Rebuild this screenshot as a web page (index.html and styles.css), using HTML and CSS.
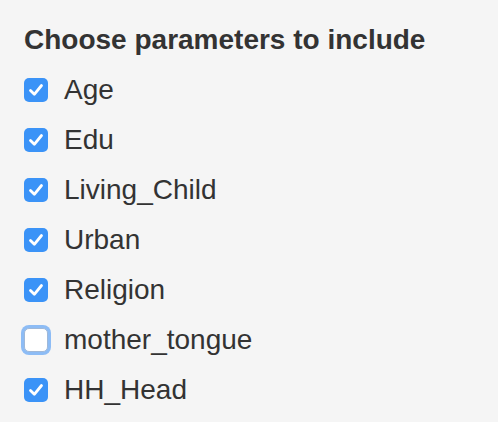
FILE: index.html
```html
<!DOCTYPE html>
<html>
<head>
<meta charset="utf-8">
<link rel="stylesheet" href="styles.css">
</head>
<body>
<div class="panel">
  <div class="group">
    <div class="title">Choose parameters to include</div>
    <div class="options">
      <label class="opt"><span class="box checked"><svg viewBox="0 0 24 24"><path d="M6.5 12.5 L10.3 16.3 L17.5 7.5" /></svg></span><span class="txt">Age</span></label>
      <label class="opt"><span class="box checked"><svg viewBox="0 0 24 24"><path d="M6.5 12.5 L10.3 16.3 L17.5 7.5" /></svg></span><span class="txt">Edu</span></label>
      <label class="opt"><span class="box checked"><svg viewBox="0 0 24 24"><path d="M6.5 12.5 L10.3 16.3 L17.5 7.5" /></svg></span><span class="txt">Living_Child</span></label>
      <label class="opt"><span class="box checked"><svg viewBox="0 0 24 24"><path d="M6.5 12.5 L10.3 16.3 L17.5 7.5" /></svg></span><span class="txt">Urban</span></label>
      <label class="opt"><span class="box checked"><svg viewBox="0 0 24 24"><path d="M6.5 12.5 L10.3 16.3 L17.5 7.5" /></svg></span><span class="txt">Religion</span></label>
      <label class="opt"><span class="box focus"></span><span class="txt">mother_tongue</span></label>
      <label class="opt"><span class="box checked"><svg viewBox="0 0 24 24"><path d="M6.5 12.5 L10.3 16.3 L17.5 7.5" /></svg></span><span class="txt">HH_Head</span></label>
    </div>
  </div>
</div>
</body>
</html>
```

FILE: styles.css
```css
html, body {
  margin: 0;
  padding: 0;
  background: #f5f5f5;
}
body {
  font-family: "Liberation Sans", Arial, sans-serif;
  color: #333333;
  font-size: 28px;
}
.panel {
  padding: 20px 24px 0 24px;
}
.title {
  font-weight: bold;
  line-height: 40px;
  margin-bottom: 10px;
}
.options {
  display: flex;
  flex-direction: column;
  gap: 10px;
}
.opt {
  display: flex;
  align-items: center;
  height: 40px;
  line-height: 40px;
}
.box {
  width: 24px;
  height: 24px;
  box-sizing: border-box;
  border-radius: 5px;
  margin-right: 16px;
  flex: none;
  display: flex;
  align-items: center;
  justify-content: center;
}
.box.checked {
  background: #3b93f7;
}
.box svg {
  width: 24px;
  height: 24px;
  fill: none;
  stroke: #ffffff;
  stroke-width: 2.8;
  stroke-linecap: round;
  stroke-linejoin: round;
}
.box.focus {
  background: #ffffff;
  border: 1px solid #9fb8d8;
  box-shadow: 0 0 0 3px #8dbcf5;
}
```
